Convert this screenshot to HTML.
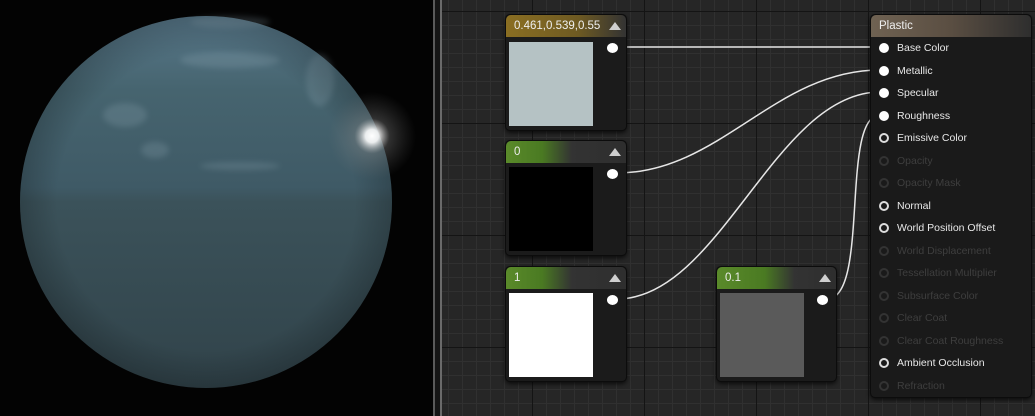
<!DOCTYPE html>
<html><head><style>
*{margin:0;padding:0;box-sizing:border-box}
body{width:1035px;height:416px;overflow:hidden;background:#000;font-family:"Liberation Sans",sans-serif;position:relative}
#left{position:absolute;left:0;top:0;width:433px;height:416px;background:#030303}
#div1{position:absolute;left:433px;top:0;width:2px;height:416px;background:#5a5a5a}
#div2{position:absolute;left:435px;top:0;width:5px;height:416px;background:#151515}
#div3{position:absolute;left:440px;top:0;width:2px;height:416px;background:#6a6a6a}
#graph{position:absolute;left:442px;top:0;width:593px;height:416px;background-color:#262626;
background-image:
linear-gradient(90deg,#141414 0 1px,transparent 1px),
linear-gradient(0deg,#141414 0 1px,transparent 1px),
linear-gradient(90deg,#303030 0 1px,transparent 1px),
linear-gradient(0deg,#303030 0 1px,transparent 1px);
background-size:112px 112px,112px 112px,14px 14px,14px 14px;
background-position:90px 0,0 12px,6px 0,0 12px}
.node{position:absolute;background:#1b1b1b;border-radius:5px;box-shadow:0 2px 4px rgba(0,0,0,.7);border:1px solid #0c0c0c}
.hdr{height:22px;border-radius:5px 5px 0 0;color:#eee;font-size:11.5px;line-height:22px;padding-left:8px;position:relative}
.tri{position:absolute;right:5px;top:7px;width:0;height:0;border-left:6px solid transparent;border-right:6px solid transparent;border-bottom:8px solid #cfcfcf}
.sw{position:absolute;width:84px;height:84px}
.pin{position:absolute;width:11px;height:10px;border-radius:50%;background:#fff}
.row{position:absolute;left:8px;font-size:10.5px;color:#e8e8e8;height:14px;line-height:14px;padding-left:18px;white-space:nowrap}
.row i{position:absolute;left:0;top:2px;width:10px;height:10px;border-radius:50%;border:2px solid #ddd}
.row i.f{background:#fff;border-color:#fff}
.row.d{color:#3e3e3e}.row.d i{border-color:#333}
</style></head><body>
<div id="left">
<svg width="433" height="416" style="position:absolute;left:0;top:0">
<defs>
<linearGradient id="sg" x1="0" y1="0" x2="0" y2="1">
<stop offset="0" stop-color="#58788a"/><stop offset=".2" stop-color="#46646f"/>
<stop offset=".46" stop-color="#3f5a66"/><stop offset=".5" stop-color="#3b525a"/>
<stop offset="1" stop-color="#31434a"/></linearGradient>
<radialGradient id="rim" cx=".5" cy=".5" r=".5"><stop offset=".8" stop-color="#000" stop-opacity="0"/><stop offset="1" stop-color="#000" stop-opacity=".2"/></radialGradient>
<radialGradient id="glow" cx=".5" cy=".5" r=".5"><stop offset="0" stop-color="#fff"/><stop offset=".15" stop-color="#fff" stop-opacity=".9"/><stop offset=".4" stop-color="#999" stop-opacity=".3"/><stop offset="1" stop-color="#777" stop-opacity="0"/></radialGradient>
<filter id="bl"><feGaussianBlur stdDeviation="3"/></filter>
</defs>
<circle cx="206" cy="202" r="186" fill="url(#sg)"/>
<g filter="url(#bl)" fill="#9fb6c2" opacity=".2">
<ellipse cx="125" cy="115" rx="22" ry="12"/><ellipse cx="155" cy="150" rx="14" ry="8"/>
<ellipse cx="240" cy="166" rx="40" ry="4"/><ellipse cx="230" cy="22" rx="40" ry="6"/>
<ellipse cx="320" cy="80" rx="14" ry="26"/><ellipse cx="230" cy="60" rx="50" ry="8"/>
</g>
<circle cx="206" cy="202" r="186" fill="url(#rim)"/>
<circle cx="372" cy="136" r="44" fill="url(#glow)"/>
</svg>
</div>
<div id="div1"></div><div id="div2"></div><div id="div3"></div>
<div id="graph"></div>
<svg width="1035" height="416" style="position:absolute;left:0;top:0">
<g fill="none" stroke="#e6e6e6" stroke-width="1.5">
<path d="M617 47 L880 47"/>
<path d="M617 173 C720 173 775 70 880 70"/>
<path d="M617 299 C720 299 775 92 880 92"/>
<path d="M827 299 C870 299 840 115 880 115"/>
</g></svg>

<div class="node" style="left:505px;top:14px;width:122px;height:117px">
<div class="hdr" style="background:linear-gradient(90deg,#8a6e22,#6e5a22 60%,#333 100%)">0.461,0.539,0.55<div class="tri"></div></div>
<div class="sw" style="left:3px;top:27px;background:#b5c2c4"></div>
<div class="pin" style="left:101px;top:28px"></div>
</div>
<div class="node" style="left:505px;top:140px;width:122px;height:116px">
<div class="hdr" style="background:linear-gradient(90deg,#5a8a2a,#4a7a22 30%,#333 55%,#2e2e2e)">0<div class="tri"></div></div>
<div class="sw" style="left:3px;top:26px;background:#000"></div>
<div class="pin" style="left:101px;top:28px"></div>
</div>
<div class="node" style="left:505px;top:266px;width:122px;height:116px">
<div class="hdr" style="background:linear-gradient(90deg,#5a8a2a,#4a7a22 30%,#333 55%,#2e2e2e)">1<div class="tri"></div></div>
<div class="sw" style="left:3px;top:26px;background:#fff"></div>
<div class="pin" style="left:101px;top:28px"></div>
</div>
<div class="node" style="left:716px;top:266px;width:121px;height:116px">
<div class="hdr" style="background:linear-gradient(90deg,#5a8a2a,#4a7a22 40%,#333 65%,#2e2e2e)">0.1<div class="tri"></div></div>
<div class="sw" style="left:3px;top:26px;background:#5a5a5a"></div>
<div class="pin" style="left:100px;top:28px"></div>
</div>
<div class="node" style="left:870px;top:14px;width:162px;height:384px;background:#1a1a1a">
<div class="hdr" style="background:linear-gradient(90deg,#6f6252,#5a4e42 50%,#2e2e2e 100%)">Plastic</div>
<div class="row" style="top:26px"><i class="f"></i>Base Color</div>
<div class="row" style="top:49px"><i class="f"></i>Metallic</div>
<div class="row" style="top:71px"><i class="f"></i>Specular</div>
<div class="row" style="top:94px"><i class="f"></i>Roughness</div>
<div class="row" style="top:116px"><i></i>Emissive Color</div>
<div class="row d" style="top:139px"><i></i>Opacity</div>
<div class="row d" style="top:161px"><i></i>Opacity Mask</div>
<div class="row" style="top:184px"><i></i>Normal</div>
<div class="row" style="top:206px"><i></i>World Position Offset</div>
<div class="row d" style="top:229px"><i></i>World Displacement</div>
<div class="row d" style="top:251px"><i></i>Tessellation Multiplier</div>
<div class="row d" style="top:274px"><i></i>Subsurface Color</div>
<div class="row d" style="top:296px"><i></i>Clear Coat</div>
<div class="row d" style="top:319px"><i></i>Clear Coat Roughness</div>
<div class="row" style="top:341px"><i></i>Ambient Occlusion</div>
<div class="row d" style="top:364px"><i></i>Refraction</div>
</div>
</body></html>
